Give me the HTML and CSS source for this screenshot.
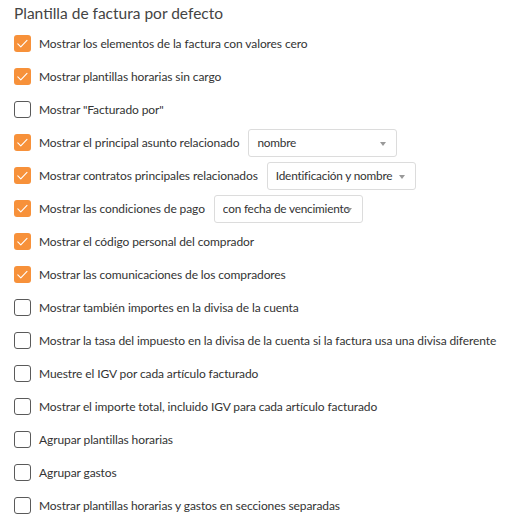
FILE: index.html
```html
<!DOCTYPE html>
<html lang="es">

<head>
    <meta charset="UTF-8">
    <title>Plantilla de factura por defecto</title>
    <link rel="stylesheet" href="styles.css">
</head>

<body>
    <!-- Opciones de la plantilla de factura -->
    <div class="invoice-settings">
        <h2>Plantilla de factura por defecto</h2>

        <label class="option"><input type="checkbox" checked><span class="box"></span>Mostrar los elementos de la factura con valores cero</label>
        <label class="option"><input type="checkbox" checked><span class="box"></span>Mostrar plantillas horarias sin cargo</label>
        <label class="option"><input type="checkbox"><span class="box"></span>Mostrar "Facturado por"</label>

        <div class="option">
            <label class="check"><input type="checkbox" checked><span class="box"></span>Mostrar el principal asunto relacionado</label>
            <div class="select"><span class="value">nombre</span><span class="arrow"></span></div>
        </div>
        <div class="option">
            <label class="check"><input type="checkbox" checked><span class="box"></span>Mostrar contratos principales relacionados</label>
            <div class="select"><span class="value">Identificación y nombre</span><span class="arrow"></span></div>
        </div>
        <div class="option">
            <label class="check"><input type="checkbox" checked><span class="box"></span>Mostrar las condiciones de pago</label>
            <div class="select"><span class="value">con fecha de vencimiento</span><span class="arrow"></span></div>
        </div>

        <label class="option"><input type="checkbox" checked><span class="box"></span>Mostrar el código personal del comprador</label>
        <label class="option"><input type="checkbox" checked><span class="box"></span>Mostrar las comunicaciones de los compradores</label>
        <label class="option"><input type="checkbox"><span class="box"></span>Mostrar también importes en la divisa de la cuenta</label>
        <label class="option"><input type="checkbox"><span class="box"></span>Mostrar la tasa del impuesto en la divisa de la cuenta si la factura usa una divisa diferente</label>
        <label class="option"><input type="checkbox"><span class="box"></span>Muestre el IGV por cada artículo facturado</label>
        <label class="option"><input type="checkbox"><span class="box"></span>Mostrar el importe total, incluido IGV para cada artículo facturado</label>
        <label class="option"><input type="checkbox"><span class="box"></span>Agrupar plantillas horarias</label>
        <label class="option"><input type="checkbox"><span class="box"></span>Agrupar gastos</label>
        <label class="option"><input type="checkbox"><span class="box"></span>Mostrar plantillas horarias y gastos en secciones separadas</label>
    </div>
</body>

</html>
```

FILE: styles.css
```css
/* General Styles */
html,
body {
    margin: 0;
    background-color: #ffffff;
    font-family: Lato, "Open Sans", Arial, sans-serif;
    color: #333;
}

.invoice-settings {
    padding: 1px 14px 0 14px;
}

h2 {
    margin: 0 0 2px 0;
    height: 24px;
    font-size: 15.5px;
    font-weight: 400;
    color: #444;
    line-height: 24px;
}

.option {
    display: flex;
    align-items: center;
    height: 33px;
    font-size: 12px;
    letter-spacing: -0.1px;
    white-space: nowrap;
    cursor: pointer;
}

.check {
    display: flex;
    align-items: center;
    cursor: pointer;
}

/* Custom checkbox */
.option input {
    display: none;
}

.box {
    flex: none;
    box-sizing: border-box;
    width: 17px;
    height: 17px;
    margin-right: 8px;
    border: 1.5px solid #5a5a5a;
    border-radius: 3px;
    background: #fff;
}

input:checked + .box {
    border: none;
    background: #f7913a url("data:image/svg+xml,%3Csvg xmlns='http://www.w3.org/2000/svg' viewBox='0 0 17 17'%3E%3Cpath d='M3.8 8.8l3 3 6.2-6.4' fill='none' stroke='white' stroke-width='1.1' stroke-linecap='round' stroke-linejoin='round'/%3E%3C/svg%3E") center / 17px 17px no-repeat;
}

/* Dropdowns */
.select {
    position: relative;
    box-sizing: border-box;
    width: 149px;
    height: 28px;
    margin-left: 9px;
    padding: 0 3px 0 8px;
    border: 1px solid #dcdcdc;
    border-radius: 3px;
    font-size: 11.8px;
    line-height: 26px;
    letter-spacing: -0.2px;
    overflow: hidden;
}

.select .value {
    display: block;
    overflow: hidden;
}

.arrow {
    position: absolute;
    right: 10px;
    top: 12px;
    width: 0;
    height: 0;
    border-left: 3.5px solid transparent;
    border-right: 3.5px solid transparent;
    border-top: 4px solid #999;
}
```
